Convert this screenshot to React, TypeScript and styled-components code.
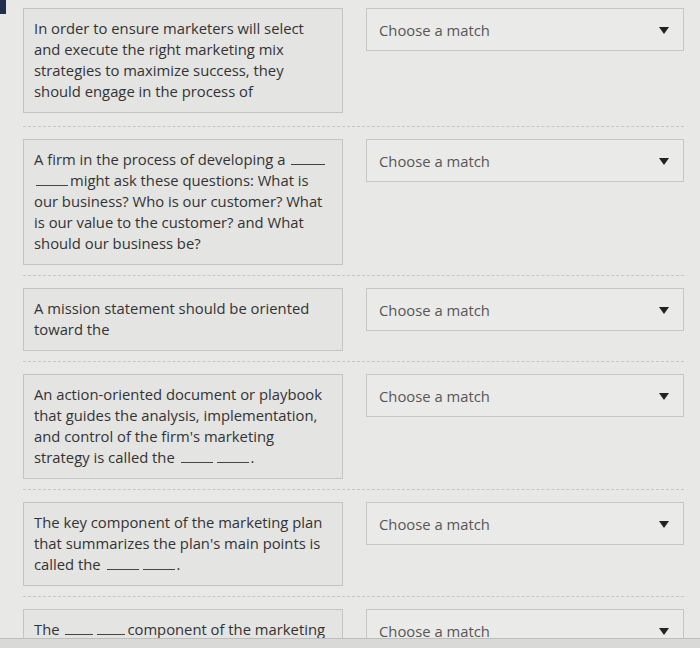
import React from 'react';
import styled, { createGlobalStyle } from 'styled-components';

const GlobalStyle = createGlobalStyle`
  html, body {
    margin: 0;
    padding: 0;
    background: #e8e8e7;
    overflow: hidden;
  }
  body {
    font-family: 'Open Sans', 'Noto Sans', sans-serif;
    color: #333;
  }
`;

const Page = styled.main`
  position: relative;
  width: 700px;
  height: 648px;
  overflow: hidden;
  padding-left: 23px;
  box-sizing: border-box;
`;

const Corner = styled.div`
  position: absolute;
  left: 0;
  top: 0;
  width: 6px;
  height: 14px;
  background: #1f2f4d;
`;

const Row = styled.section`
  display: grid;
  grid-template-columns: 320px 318px;
  column-gap: 23px;
  align-items: start;
  padding: 12px 0 10px;
  border-bottom: 1px dashed #c6c6c4;
  width: 661px;

  &:first-of-type {
    padding-top: 8px;
    padding-bottom: 13px;
  }
`;

const Prompt = styled.div`
  background: #e4e4e3;
  border: 1px solid #c4c4c2;
  padding: 9px 10px 10px;
  font-size: 14.8px;
  line-height: 21px;
`;

const Line = styled.div`
  white-space: nowrap;
`;

const Blank = styled.span<{ $w: number }>`
  display: inline-block;
  width: ${(p) => p.$w}px;
  border-bottom: 1px solid #444;
  height: 14px;
  margin: 0 2px;
`;

const Select = styled.div`
  display: flex;
  align-items: center;
  justify-content: space-between;
  height: 43px;
  box-sizing: border-box;
  padding: 0 14px 0 12px;
  background: #eaeae9;
  border: 1px solid #c6c6c4;
  font-size: 14.8px;
  color: #575757;
`;

const Caret = styled.span`
  width: 0;
  height: 0;
  border-left: 5px solid transparent;
  border-right: 5px solid transparent;
  border-top: 7px solid #222;
  margin-top: 2px;
`;

const Bezel = styled.div`
  position: absolute;
  left: 0;
  right: 0;
  bottom: 0;
  height: 9px;
  background: #d9d9d8;
  border-top: 1px solid #bdbdbb;
`;

type Item = { lines: React.ReactNode[] };

const items: Item[] = [
  {
    lines: [
      'In order to ensure marketers will select',
      'and execute the right marketing mix',
      'strategies to maximize success, they',
      'should engage in the process of',
    ],
  },
  {
    lines: [
      <>A firm in the process of developing a <Blank $w={34} /></>,
      <><Blank $w={32} />might ask these questions: What is</>,
      'our business? Who is our customer? What',
      'is our value to the customer? and What',
      'should our business be?',
    ],
  },
  {
    lines: ['A mission statement should be oriented', 'toward the'],
  },
  {
    lines: [
      'An action-oriented document or playbook',
      'that guides the analysis, implementation,',
      "and control of the firm's marketing",
      <>strategy is called the <Blank $w={32} /><Blank $w={32} />.</>,
    ],
  },
  {
    lines: [
      'The key component of the marketing plan',
      "that summarizes the plan's main points is",
      <>called the <Blank $w={32} /><Blank $w={32} />.</>,
    ],
  },
  {
    lines: [<>The <Blank $w={28} /><Blank $w={28} />component of the marketing</>],
  },
];

export default function App() {
  return (
    <>
      <GlobalStyle />
      <Page>
        <Corner />
        {items.map((item, i) => (
          <Row key={i}>
            <Prompt>
              {item.lines.map((l, j) => (
                <Line key={j}>{l}</Line>
              ))}
            </Prompt>
            <Select>
              <span>Choose a match</span>
              <Caret />
            </Select>
          </Row>
        ))}
        <Bezel />
      </Page>
    </>
  );
}
